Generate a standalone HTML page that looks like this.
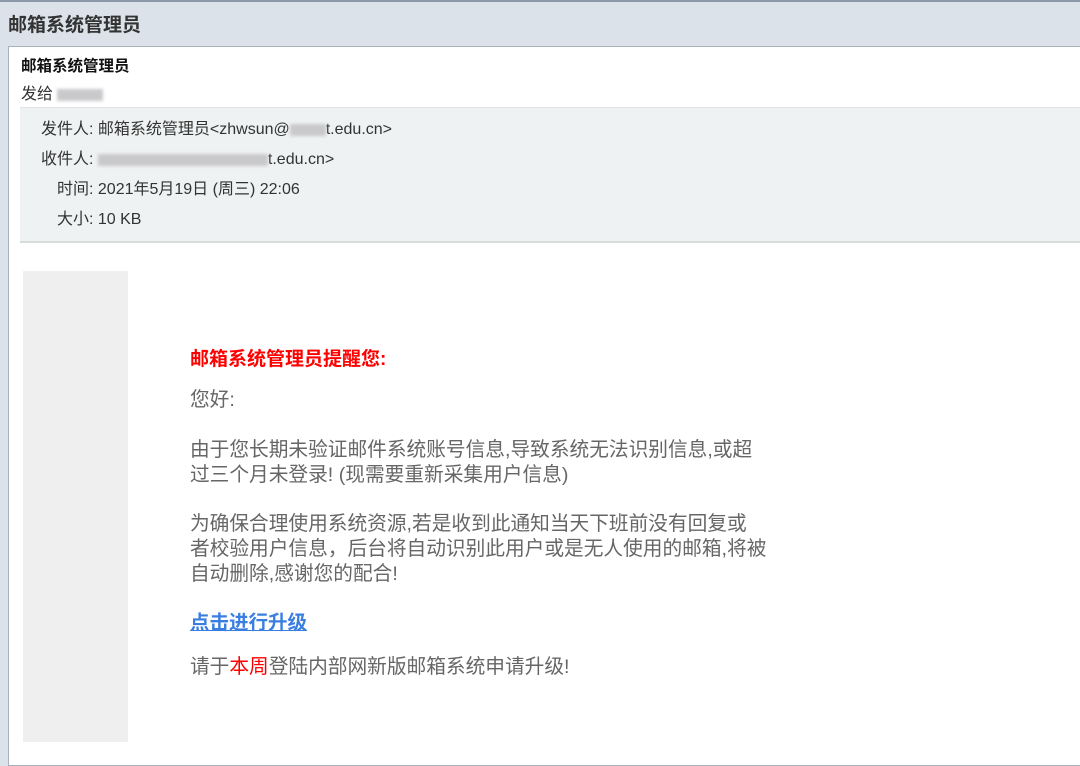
<!DOCTYPE html>
<html><head><meta charset="utf-8"><style>
*{margin:0;padding:0;box-sizing:border-box}
body{width:1080px;height:742px;overflow:hidden;background:#dbe2ea;font-family:"Liberation Sans","Noto Sans CJK SC",sans-serif;position:relative}
.a{position:absolute;white-space:nowrap}
.top{left:0;top:0;width:1080px;height:2px;background:#8a98a8}
.panel{left:8px;top:46px;width:1080px;height:720px;background:#fff;border:1px solid #a9b3bd}
.hdr{left:20px;top:107px;width:1060px;height:136px;background:#eff2f2;border-top:1px solid #e0e4e4;border-bottom:2px solid #d8dcdc}
.grey{left:23px;top:271px;width:105px;height:471px;background:#efefef}
.h{font-size:16px;color:#333;line-height:20px}
.b{font-size:19.7px;color:#666;line-height:25px}
.blur{display:inline-block;background:#c9c9cc;height:12px;vertical-align:middle;filter:blur(1.5px)}
</style></head><body>
<div class="a top"></div>
<div class="a" style="left:8px;top:10px;font-size:19px;font-weight:bold;color:#333">邮箱系统管理员</div>
<div class="a panel"></div>
<div class="a" style="left:21px;top:54px;font-size:15.5px;font-weight:bold;color:#111">邮箱系统管理员</div>
<div class="a" style="left:21px;top:80px;font-size:16px;color:#333">发给 <span class="blur" style="width:46px"></span></div>
<div class="a hdr"></div>
<div class="a h" style="left:41px;top:120px">发件人: 邮箱系统管理员&lt;zhwsun@<span class="blur" style="width:36px"></span>t.edu.cn&gt;</div>
<div class="a h" style="left:41px;top:150px">收件人: <span class="blur" style="width:170px"></span>t.edu.cn&gt;</div>
<div class="a h" style="left:57px;top:180px">时间: 2021年5月19日 (周三) 22:06</div>
<div class="a h" style="left:57px;top:210px">大小: 10 KB</div>
<div class="a grey"></div>
<div class="a" style="left:190px;top:344px;font-size:19px;font-weight:bold;color:#f00">邮箱系统管理员提醒您:</div>
<div class="a b" style="left:190px;top:388px">您好:</div>
<div class="a b" style="left:190px;top:438px">由于您长期未验证邮件系统账号信息,导致系统无法识别信息,或超</div>
<div class="a b" style="left:190px;top:463px">过三个月未登录! (现需要重新采集用户信息)</div>
<div class="a b" style="left:190px;top:512px">为确保合理使用系统资源,若是收到此通知当天下班前没有回复或</div>
<div class="a b" style="left:190px;top:537px">者校验用户信息，后台将自动识别此用户或是无人使用的邮箱,将被</div>
<div class="a b" style="left:190px;top:562px">自动删除,感谢您的配合!</div>
<div class="a" style="left:190px;top:606px;font-size:19.5px;font-weight:bold;color:#3a7fe0;text-decoration:underline">点击进行升级</div>
<div class="a b" style="left:190px;top:655px">请于<span style="color:#f00">本周</span>登陆内部网新版邮箱系统申请升级!</div>
</body></html>
